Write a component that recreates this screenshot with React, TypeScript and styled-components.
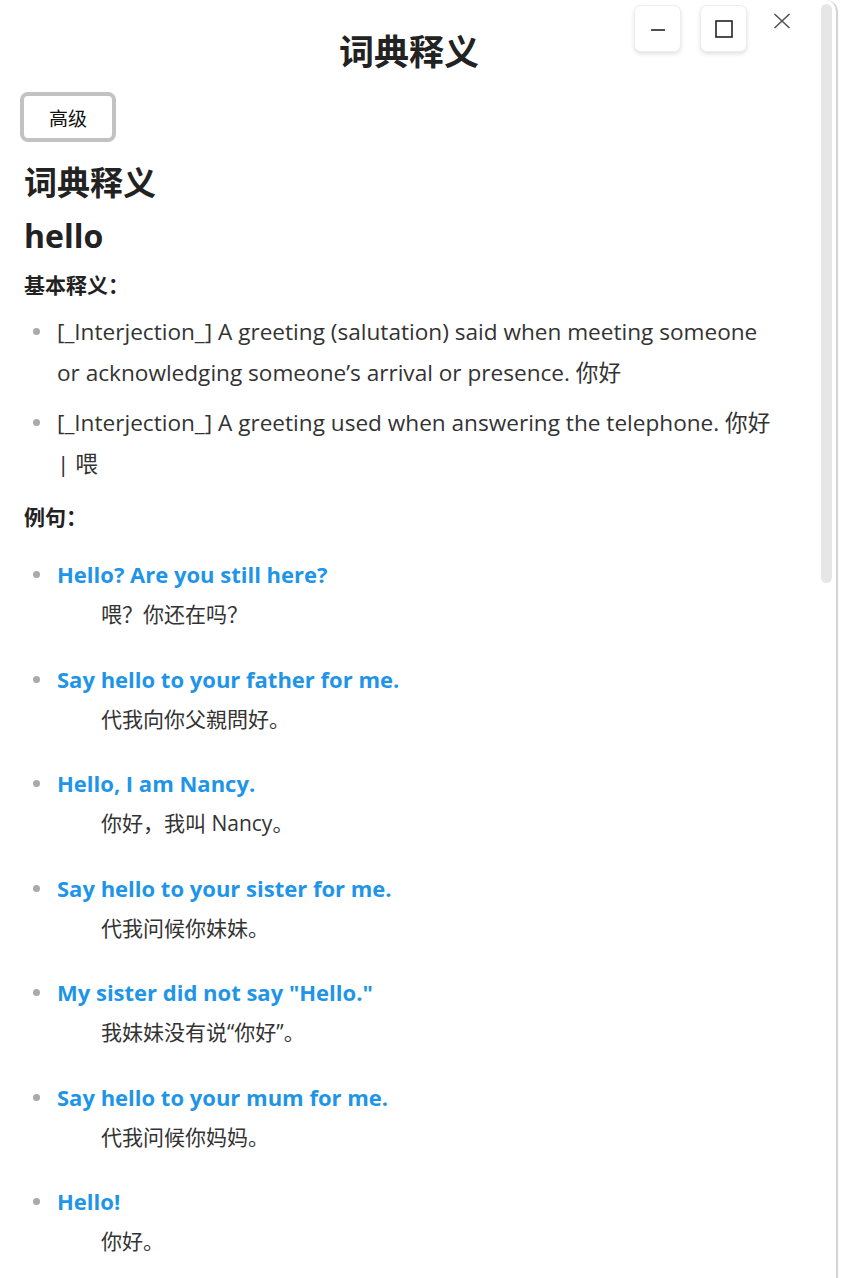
import React from "react";
import styled, { createGlobalStyle } from "styled-components";

const Global = createGlobalStyle`
  html, body { margin: 0; padding: 0; background: #ffffff; }
  body { font-family: "Open Sans", "Noto Sans CJK SC", sans-serif; color: #333; }
  * { box-sizing: border-box; }
`;

const Frame = styled.div`
  position: relative;
  width: 838px;
  height: 1278px;
  background: #fff;
  border-right: 2px solid #d4d4d4;
  border-top-right-radius: 12px;
  overflow: hidden;
`;

const ScrollThumb = styled.div`
  position: absolute;
  top: 4px;
  right: 4px;
  width: 11px;
  height: 579px;
  background: #e6e6e6;
  border-radius: 6px;
`;

const Header = styled.header`
  position: relative;
  height: 92px;
  padding-top: 26px;
  display: flex;
  justify-content: center;
`;

const Title = styled.h1`
  margin: 0 0 0 -18px;
  font-size: 35px;
  line-height: 48px;
  font-weight: 700;
  color: #222;
  font-family: "Noto Sans CJK SC", sans-serif;
`;

const Controls = styled.div`
  position: absolute;
  top: 5px;
  right: 40px;
  display: flex;
  align-items: flex-start;
  gap: 19px;
`;

const CtrlButton = styled.button`
  width: 47px;
  height: 47px;
  border: 1px solid #eee;
  border-radius: 7px;
  background: #fff;
  box-shadow: 0 2px 4px rgba(0, 0, 0, 0.12);
  display: flex;
  align-items: center;
  justify-content: center;
  padding: 0;
  color: #222;
`;

const CloseButton = styled.button`
  width: 28px;
  height: 28px;
  margin-left: 2px;
  margin-top: 2px;
  border: none;
  background: transparent;
  display: flex;
  align-items: center;
  justify-content: center;
  padding: 0;
`;

const Content = styled.main`
  padding: 0 58px 0 24px;
`;

const AdvancedButton = styled.button`
  margin-left: -4px;
  width: 96px;
  height: 50px;
  border: 4px solid #c2c2c2;
  border-radius: 8px;
  background: #fff;
  font-family: "Noto Sans CJK SC", sans-serif;
  font-size: 19px;
  color: #111;
  padding: 0;
`;

const SectionTitle = styled.h2`
  margin: 18px 0 0;
  font-size: 33px;
  line-height: 42px;
  font-weight: 700;
  color: #222;
  font-family: "Noto Sans CJK SC", sans-serif;
`;

const Word = styled.h3`
  margin: 14px 0 0;
  font-size: 32px;
  line-height: 40px;
  font-weight: 700;
  color: #222;
`;

const Label = styled.h4<{ $gap: number }>`
  margin: ${(p) => p.$gap}px 0 0;
  font-size: 21px;
  line-height: 28px;
  font-weight: 700;
  color: #222;
  font-family: "Noto Sans CJK SC", sans-serif;
`;

const List = styled.ul<{ $gap: number }>`
  list-style: none;
  margin: ${(p) => p.$gap}px 0 0;
  padding: 0 0 0 33px;
`;

const Bullet = styled.li`
  position: relative;
  &::before {
    content: "";
    position: absolute;
    left: -24px;
    top: 17px;
    width: 7px;
    height: 7px;
    border-radius: 50%;
    background: #aaa;
  }
`;

const DefItem = styled(Bullet)`
  font-size: 22.6px;
  line-height: 41px;
  color: #333;
  margin-bottom: 9px;
`;

const ExItem = styled(Bullet)`
  margin-bottom: 24.5px;
`;

const ExEn = styled.div`
  font-size: 22px;
  line-height: 40px;
  font-weight: 700;
  color: #1f95e8;
`;

const ExZh = styled.div`
  padding-left: 44px;
  font-size: 21px;
  line-height: 40px;
  color: #333;
`;

const defs = [
  "[_Interjection_] A greeting (salutation) said when meeting someone or acknowledging someone\u2019s arrival or presence. 你好",
  "[_Interjection_] A greeting used when answering the telephone. 你好 | 喂",
];

const examples: [string, string][] = [
  ["Hello? Are you still here?", "喂？你还在吗？"],
  ["Say hello to your father for me.", "代我向你父親問好。"],
  ["Hello, I am Nancy.", "你好，我叫 Nancy。"],
  ["Say hello to your sister for me.", "代我问候你妹妹。"],
  ['My sister did not say "Hello."', "我妹妹没有说“你好”。"],
  ["Say hello to your mum for me.", "代我问候你妈妈。"],
  ["Hello!", "你好。"],
];

export default function App() {
  return (
    <>
      <Global />
      <Frame>
        <Header>
          <Title>词典释义</Title>
          <Controls>
            <CtrlButton aria-label="minimize">
              <svg width="16" height="16" viewBox="0 0 16 16">
                <line x1="1" y1="9" x2="15" y2="9" stroke="#222" strokeWidth="1.6" />
              </svg>
            </CtrlButton>
            <CtrlButton aria-label="maximize">
              <svg width="18" height="18" viewBox="0 0 18 18">
                <rect x="1" y="1" width="16" height="16" fill="none" stroke="#222" strokeWidth="1.6" />
              </svg>
            </CtrlButton>
            <CloseButton aria-label="close">
              <svg width="18" height="16" viewBox="0 0 18 16">
                <path d="M1.5 1 L16.5 15 M16.5 1 L1.5 15" stroke="#555" strokeWidth="1.6" fill="none" />
              </svg>
            </CloseButton>
          </Controls>
        </Header>
        <Content>
          <AdvancedButton>高级</AdvancedButton>
          <SectionTitle>词典释义</SectionTitle>
          <Word>hello</Word>
          <Label $gap={14}>基本释义：</Label>
          <List $gap={13}>
            {defs.map((d) => (
              <DefItem key={d}>{d}</DefItem>
            ))}
          </List>
          <Label $gap={18}>例句：</Label>
          <List $gap={24}>
            {examples.map(([en, zh]) => (
              <ExItem key={en}>
                <ExEn>{en}</ExEn>
                <ExZh>{zh}</ExZh>
              </ExItem>
            ))}
          </List>
        </Content>
        <ScrollThumb />
      </Frame>
    </>
  );
}
